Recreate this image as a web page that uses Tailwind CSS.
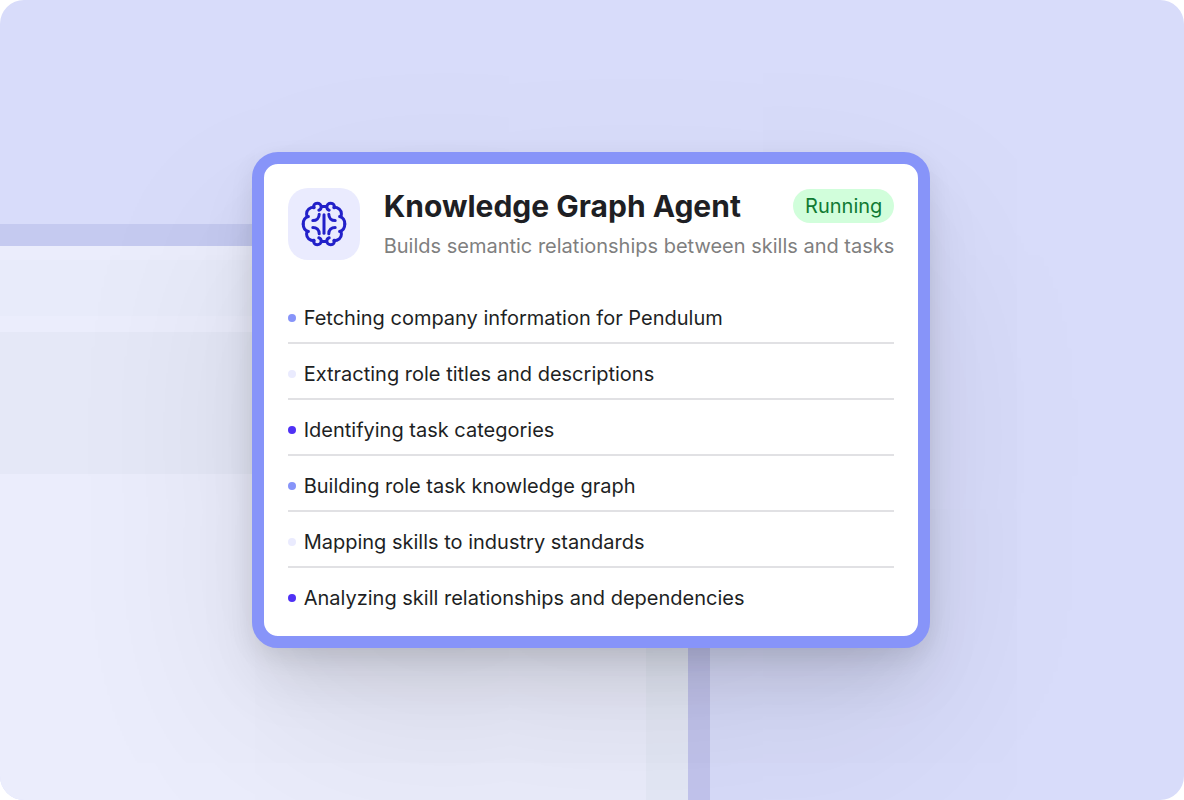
<!DOCTYPE html>
<html lang="en">
    <head>
        <meta charset="UTF-8">
        <meta name="viewport" content="width=device-width, initial-scale=1.0">
        <title>Knowledge Graph Agent</title>
        <script src="https://cdn.jsdelivr.net/npm/@tailwindcss/browser@4"></script>
    </head>
    <body class="bg-white font-['Inter',sans-serif] text-[#1e1f24]">

        <main
            class="relative isolate min-h-screen overflow-hidden rounded-3xl bg-[#d8dcfa] pr-0.5 flex items-center justify-center">

            <!-- Window behind the card -->
            <div
                class="absolute -z-10 left-0 top-56 bottom-0 w-[60%] border-t-22 border-r-22 border-t-[#c5caf0] border-r-[#c3c5ee] bg-[#ebedfc]"
                aria-hidden="true">
                <div class="mt-3.5 h-14 bg-[#e8ebfa]"></div>
                <div class="mt-4 h-[142px] bg-[#e5e8f7]"></div>
                <div class="absolute right-0 top-[228px] bottom-0 w-[42px] bg-[#e5e9f7]"></div>
            </div>

            <!-- Agent card -->
            <article
                class="rounded-[26px] border-12 border-[#8794f9] bg-white p-6 shadow-[0_8px_24px_rgba(0,0,0,0.08),0_36px_64px_-12px_rgba(0,0,0,0.13),0_80px_200px_rgba(0,0,0,0.09)]">
                <header class="flex gap-6">
                    <div
                        class="size-18 shrink-0 rounded-[20px] bg-[#eaebfe] flex items-center justify-center">
                        <svg class="size-12 text-[#2220c9]" viewBox="0 0 24 24" fill="none"
                            stroke="currentColor" stroke-width="1.5" stroke-linecap="round"
                            stroke-linejoin="round" aria-hidden="true">
                            <path d="M12 7.4v9.2" />
                            <g id="quarter">
                                <path d="M12 3.200h-1.500M6.900 3.900C6.500 2.700 7.300 1.600 8.600 1.600c1.200 0 2 .8 2 1.800 0 .9-.5 1.500-1.200 1.700" />
                                <path d="M7.100 3.600C4.800 3.600 3.300 5 3.300 6.900c0 .5.100.8.200 1.200" />
                                <path d="M4.200 8.300C2.500 8.700 1.600 9.900 1.600 12" />
                                <path d="M9.600 7.100c0 1.900-1.300 3.200-3.200 3.200" />
                            </g>
                            <use href="#quarter" transform="matrix(-1 0 0 1 24 0)" />
                            <use href="#quarter" transform="matrix(1 0 0 -1 0 24)" />
                            <use href="#quarter" transform="matrix(-1 0 0 -1 24 24)" />
                        </svg>
                    </div>
                    <div class="grow">
                        <div class="flex items-center justify-between">
                            <h1 class="text-[30px] leading-9 font-bold">Knowledge Graph Agent</h1>
                            <span
                                class="rounded-full bg-[#d1fedb] px-3 py-1 text-xl leading-[26px] text-[#107a33]">Running</span>
                        </div>
                        <p class="mt-2 text-xl leading-7 text-[#7f7f7f]">Builds semantic relationships between skills and tasks</p>
                    </div>
                </header>

                <ul class="mt-7 text-xl leading-7">
                    <li class="flex items-center gap-2 pt-4 pb-2.5 border-b-2 border-[#e1e1e4]">
                        <span class="size-2 rounded-full bg-[#8794f9]"></span>Fetching company information for Pendulum
                    </li>
                    <li class="flex items-center gap-2 pt-4 pb-2.5 border-b-2 border-[#e1e1e4]">
                        <span class="size-2 rounded-full bg-[#eaebfe]"></span>Extracting role titles and descriptions
                    </li>
                    <li class="flex items-center gap-2 pt-4 pb-2.5 border-b-2 border-[#e1e1e4]">
                        <span class="size-2 rounded-full bg-[#4f31f5]"></span>Identifying task categories
                    </li>
                    <li class="flex items-center gap-2 pt-4 pb-2.5 border-b-2 border-[#e1e1e4]">
                        <span class="size-2 rounded-full bg-[#8794f9]"></span>Building role task knowledge graph
                    </li>
                    <li class="flex items-center gap-2 pt-4 pb-2.5 border-b-2 border-[#e1e1e4]">
                        <span class="size-2 rounded-full bg-[#eaebfe]"></span>Mapping skills to industry standards
                    </li>
                    <li class="flex items-center gap-2 pt-4">
                        <span class="size-2 rounded-full bg-[#4f31f5]"></span>Analyzing skill relationships and dependencies
                    </li>
                </ul>
            </article>
        </main>
    </body>
</html>
